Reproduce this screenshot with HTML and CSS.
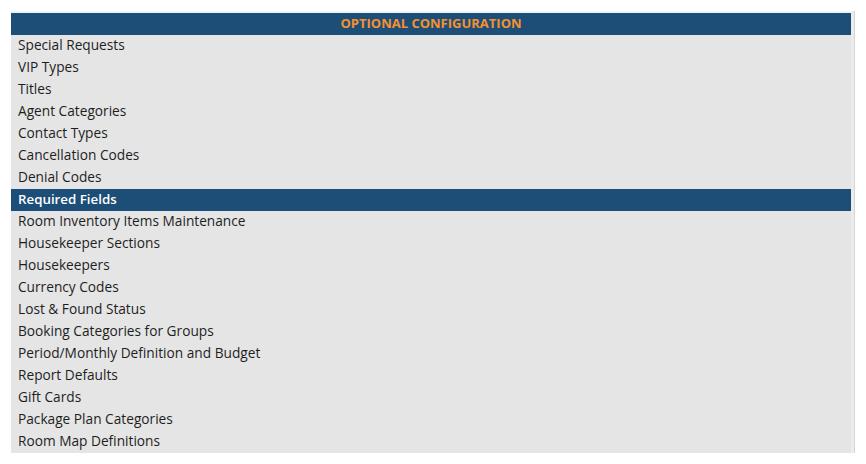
FILE: index.html
```html
<!DOCTYPE html>
<html lang="en">
  <head>
    <meta charset="UTF-8" />
    <title>Optional Configuration</title>
    <link rel="stylesheet" href="styles.css">
  </head>
  <body>
    <div class="panel">
      <div class="panel-title">OPTIONAL CONFIGURATION</div>
      <ul class="menu">
        <li><a href="#">Special Requests</a></li>
        <li><a href="#">VIP Types</a></li>
        <li><a href="#">Titles</a></li>
        <li><a href="#">Agent Categories</a></li>
        <li><a href="#">Contact Types</a></li>
        <li><a href="#">Cancellation Codes</a></li>
        <li><a href="#">Denial Codes</a></li>
        <li class="active"><a href="#">Required Fields</a></li>
        <li><a href="#">Room Inventory Items Maintenance</a></li>
        <li><a href="#">Housekeeper Sections</a></li>
        <li><a href="#">Housekeepers</a></li>
        <li><a href="#">Currency Codes</a></li>
        <li><a href="#">Lost &amp; Found Status</a></li>
        <li><a href="#">Booking Categories for Groups</a></li>
        <li><a href="#">Period/Monthly Definition and Budget</a></li>
        <li><a href="#">Report Defaults</a></li>
        <li><a href="#">Gift Cards</a></li>
        <li><a href="#">Package Plan Categories</a></li>
        <li><a href="#">Room Map Definitions</a></li>
      </ul>
    </div>
  </body>
</html>
```

FILE: styles.css
```css
body {
  margin: 0;
  padding: 11px 12px 0 11px;
  background: #fff;
  font-family: "Open Sans", sans-serif;
  font-size: 13px;
  color: #1e1e1e;
}

.panel {
  border-top: 2px solid #edf3fa;
  border-right: 3px solid #ececec;
  box-shadow: 1px 0 0 #d4d4d4;
}

.panel-title {
  height: 22px;
  line-height: 21px;
  background: #1c4e78;
  color: #f7912e;
  font-weight: 700;
  text-align: center;
}

.menu {
  list-style: none;
  margin: 0;
  padding: 0;
  background: #e5e5e5;
}

.menu li {
  height: 22px;
}

.menu a {
  display: block;
  padding-left: 7px;
  font-size: 13.7px;
  line-height: 20px;
  color: inherit;
  text-decoration: none;
}

.menu li.active {
  background: #1c4e78;
}

.menu li.active a {
  color: #fff;
  font-size: 13.3px;
  font-weight: 600;
}
```
